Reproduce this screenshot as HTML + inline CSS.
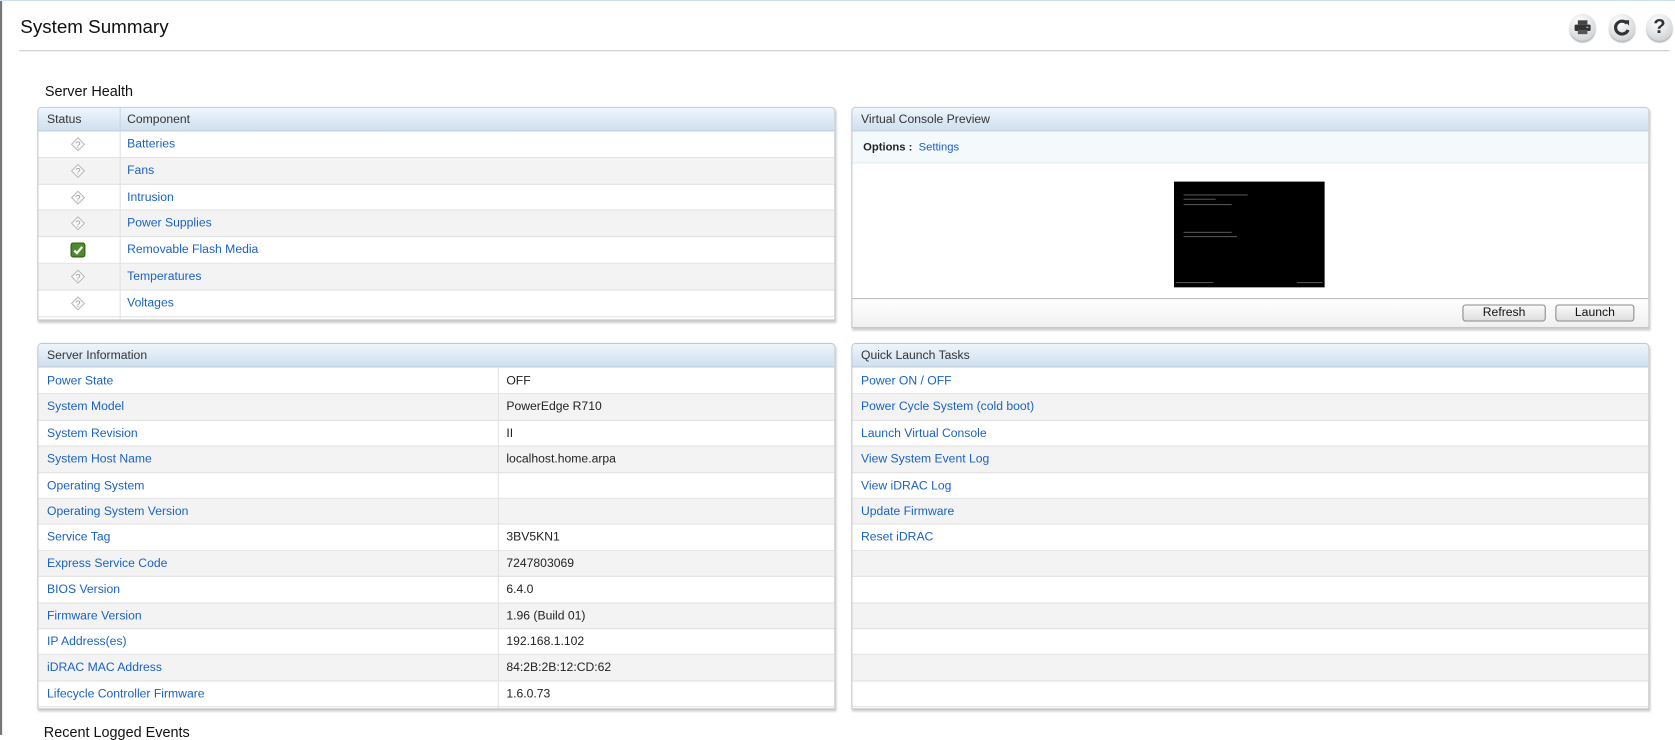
<!DOCTYPE html>
<html><head><meta charset="utf-8"><style>
*{box-sizing:border-box;margin:0;padding:0}
html,body{width:1675px;height:735px;overflow:hidden;background:#fff}
#w{position:absolute;left:0;top:0;width:1568px;height:688px;transform:scale(1.06824);transform-origin:0 0;font-family:"Liberation Sans",Arial,sans-serif;font-size:11.4px;color:#222}
a{color:#1a62c4;text-decoration:none}
.abs{position:absolute}
.panel{position:absolute;border:1px solid #c4c8cc;border-radius:4px 4px 0 0;box-shadow:1px 2px 2px #ccc;background:#fff;overflow:hidden}
.hd{height:22px;background:linear-gradient(#eef5fc,#cfe0ef);border-bottom:1px solid #b9c9d8;line-height:22px;padding-left:8px;color:#333}
.row{position:absolute;left:0;right:0;border-bottom:1px solid #e2e2e2;line-height:25px}
.row.alt{background:#f3f3f3}
.c1{position:absolute;left:8px}
.c2{position:absolute}
.vd{position:absolute;top:0;bottom:0;width:1px;background:#e2e2e2}
.ic{position:absolute;left:30px;top:5px;width:14px;height:14px}
.btn{position:absolute;top:5px;height:16px;border:1px solid #8a8a8a;border-radius:3px;background:linear-gradient(#fafafa,#dedede);text-align:center;line-height:14px;color:#111;font-size:11.4px}
.circ{position:absolute;top:13px;width:25px;height:25px;border-radius:50%;background:radial-gradient(circle at 40% 30%,#fff,#d6d9dc 70%,#b8bcc0);box-shadow:0 2px 1px #bbb;text-align:center;font-weight:bold;color:#333}
</style></head><body><div id="w">
<div class="abs" style="left:0;top:0;width:2px;height:688px;background:#777"></div>
<div class="abs" style="left:0;top:0;width:1568px;height:1px;background:#cfe0f0"></div>
<div class="abs" style="left:19px;top:15px;font-size:17.6px;color:#111">System Summary</div>
<div class="abs" style="left:18px;top:47px;width:1545px;height:1px;background:#c8c8c8"></div>
<div class="circ" style="left:1469px"><svg width="25" height="25" viewBox="0 0 25 25"><rect x="8" y="6" width="9" height="4" fill="#444"/><rect x="5" y="10" width="15" height="6" rx="1" fill="#333"/><rect x="8" y="15" width="9" height="4" fill="#555"/><rect x="16" y="12" width="2" height="1" fill="#ccc"/></svg></div>
<div class="circ" style="left:1506px"><svg width="25" height="25" viewBox="0 0 25 25"><path d="M17 9A6 6 0 1 0 18 15" stroke="#333" stroke-width="3" fill="none"/><path d="M14 6L19 6L19 11Z" fill="#333"/></svg></div>
<div class="circ" style="left:1541px;font-size:19px;line-height:25px">?</div>

<div class="abs" style="left:42px;top:78px;font-size:13.5px;color:#111">Server Health</div>

<div class="panel" style="left:35px;top:100px;width:747px;height:200px">
<div class="hd" style="position:relative">Status<span style="position:absolute;left:83px">Component</span></div>
<div class="abs" style="left:76px;top:0;width:1px;height:22px;background:#c8d6e2"></div>
<div style="position:absolute;left:0;right:0;top:22px;bottom:0">
<div class="vd" style="left:76px;z-index:2"></div>
<div class="row" style="top:0;height:24.8px"><svg class="ic" viewBox="0 0 14 14"><path d="M7 1L13 7L7 13L1 7Z" fill="#fafafa" stroke="#bbb"/><text x="7" y="10.5" font-size="9" text-anchor="middle" fill="#999" font-family="Liberation Sans">?</text></svg><a class="c2" style="left:83px">Batteries</a></div>
<div class="row alt" style="top:24.8px;height:24.8px"><svg class="ic" viewBox="0 0 14 14"><path d="M7 1L13 7L7 13L1 7Z" fill="#fafafa" stroke="#bbb"/><text x="7" y="10.5" font-size="9" text-anchor="middle" fill="#999" font-family="Liberation Sans">?</text></svg><a class="c2" style="left:83px">Fans</a></div>
<div class="row" style="top:49.6px;height:24.8px"><svg class="ic" viewBox="0 0 14 14"><path d="M7 1L13 7L7 13L1 7Z" fill="#fafafa" stroke="#bbb"/><text x="7" y="10.5" font-size="9" text-anchor="middle" fill="#999" font-family="Liberation Sans">?</text></svg><a class="c2" style="left:83px">Intrusion</a></div>
<div class="row alt" style="top:74.4px;height:24.8px"><svg class="ic" viewBox="0 0 14 14"><path d="M7 1L13 7L7 13L1 7Z" fill="#fafafa" stroke="#bbb"/><text x="7" y="10.5" font-size="9" text-anchor="middle" fill="#999" font-family="Liberation Sans">?</text></svg><a class="c2" style="left:83px">Power Supplies</a></div>
<div class="row" style="top:99.2px;height:24.8px"><svg class="ic" viewBox="0 0 14 14"><rect x="0.5" y="0.5" width="13" height="13" rx="2" fill="#4f8a2c" stroke="#2f5a16"/><path d="M3.5 7.5L6 10L11 4" stroke="#fff" stroke-width="2" fill="none"/></svg><a class="c2" style="left:83px">Removable Flash Media</a></div>
<div class="row alt" style="top:124px;height:24.8px"><svg class="ic" viewBox="0 0 14 14"><path d="M7 1L13 7L7 13L1 7Z" fill="#fafafa" stroke="#bbb"/><text x="7" y="10.5" font-size="9" text-anchor="middle" fill="#999" font-family="Liberation Sans">?</text></svg><a class="c2" style="left:83px">Temperatures</a></div>
<div class="row" style="top:148.8px;height:24.8px"><svg class="ic" viewBox="0 0 14 14"><path d="M7 1L13 7L7 13L1 7Z" fill="#fafafa" stroke="#bbb"/><text x="7" y="10.5" font-size="9" text-anchor="middle" fill="#999" font-family="Liberation Sans">?</text></svg><a class="c2" style="left:83px">Voltages</a></div>
</div></div>

<div class="panel" style="left:797px;top:100px;width:747px;height:207px">
<div class="hd">Virtual Console Preview</div>
<div style="height:30px;background:#f4f9fc;border-bottom:1px solid #e4ecf2;line-height:30px;padding-left:10px;font-size:10.5px"><b>Options :</b>&nbsp; <a>Settings</a></div>
<div class="abs" style="left:301px;top:69px;width:141px;height:99px;background:#000">
<div class="abs" style="left:9px;top:12px;width:60px;height:1px;background:#555"></div>
<div class="abs" style="left:9px;top:16px;width:30px;height:1px;background:#555"></div>
<div class="abs" style="left:9px;top:21px;width:45px;height:1px;background:#555"></div>
<div class="abs" style="left:9px;top:47px;width:45px;height:1px;background:#555"></div>
<div class="abs" style="left:9px;top:51px;width:50px;height:1px;background:#555"></div>
<div class="abs" style="left:2px;top:94px;width:35px;height:1px;background:#555"></div>
<div class="abs" style="left:115px;top:94px;width:24px;height:1px;background:#555"></div>
</div>
<div class="abs" style="left:0;right:0;top:178px;bottom:0;border-top:1px solid #bbb;background:linear-gradient(#fff,#f0f0f0)">
<div class="btn" style="left:571px;width:78px">Refresh</div>
<div class="btn" style="left:658px;width:74px">Launch</div>
</div></div>

<div class="panel" style="left:35px;top:321px;width:747px;height:343px">
<div class="hd">Server Information</div>
<div style="position:absolute;left:0;right:0;top:23px;bottom:0">
<div class="vd" style="left:430px;z-index:2"></div>
<div class="row" style="top:0;height:24.4px"><a class="c1">Power State</a><span class="c2" style="left:438px">OFF</span></div>
<div class="row alt" style="top:24.4px;height:24.4px"><a class="c1">System Model</a><span class="c2" style="left:438px">PowerEdge R710</span></div>
<div class="row" style="top:48.8px;height:24.4px"><a class="c1">System Revision</a><span class="c2" style="left:438px">II</span></div>
<div class="row alt" style="top:73.2px;height:24.4px"><a class="c1">System Host Name</a><span class="c2" style="left:438px">localhost.home.arpa</span></div>
<div class="row" style="top:97.6px;height:24.4px"><a class="c1">Operating System</a></div>
<div class="row alt" style="top:122px;height:24.4px"><a class="c1">Operating System Version</a></div>
<div class="row" style="top:146.4px;height:24.4px"><a class="c1">Service Tag</a><span class="c2" style="left:438px">3BV5KN1</span></div>
<div class="row alt" style="top:170.8px;height:24.4px"><a class="c1">Express Service Code</a><span class="c2" style="left:438px">7247803069</span></div>
<div class="row" style="top:195.2px;height:24.4px"><a class="c1">BIOS Version</a><span class="c2" style="left:438px">6.4.0</span></div>
<div class="row alt" style="top:219.6px;height:24.4px"><a class="c1">Firmware Version</a><span class="c2" style="left:438px">1.96 (Build 01)</span></div>
<div class="row" style="top:244px;height:24.4px"><a class="c1">IP Address(es)</a><span class="c2" style="left:438px">192.168.1.102</span></div>
<div class="row alt" style="top:268.4px;height:24.4px"><a class="c1">iDRAC MAC Address</a><span class="c2" style="left:438px">84:2B:2B:12:CD:62</span></div>
<div class="row" style="top:292.8px;height:24.4px"><a class="c1">Lifecycle Controller Firmware</a><span class="c2" style="left:438px">1.6.0.73</span></div>
</div></div>

<div class="panel" style="left:797px;top:321px;width:747px;height:343px">
<div class="hd">Quick Launch Tasks</div>
<div style="position:absolute;left:0;right:0;top:23px;bottom:0">
<div class="row" style="top:0;height:24.4px"><a class="c1">Power ON / OFF</a></div>
<div class="row alt" style="top:24.4px;height:24.4px"><a class="c1">Power Cycle System (cold boot)</a></div>
<div class="row" style="top:48.8px;height:24.4px"><a class="c1">Launch Virtual Console</a></div>
<div class="row alt" style="top:73.2px;height:24.4px"><a class="c1">View System Event Log</a></div>
<div class="row" style="top:97.6px;height:24.4px"><a class="c1">View iDRAC Log</a></div>
<div class="row alt" style="top:122px;height:24.4px"><a class="c1">Update Firmware</a></div>
<div class="row" style="top:146.4px;height:24.4px"><a class="c1">Reset iDRAC</a></div>
<div class="row alt" style="top:170.8px;height:24.4px"></div>
<div class="row" style="top:195.2px;height:24.4px"></div>
<div class="row alt" style="top:219.6px;height:24.4px"></div>
<div class="row" style="top:244px;height:24.4px"></div>
<div class="row alt" style="top:268.4px;height:24.4px"></div>
<div class="row" style="top:292.8px;height:24.4px"></div>
</div></div>

<div class="abs" style="left:41px;top:678px;font-size:13.5px;color:#111">Recent Logged Events</div>
</div></body></html>
